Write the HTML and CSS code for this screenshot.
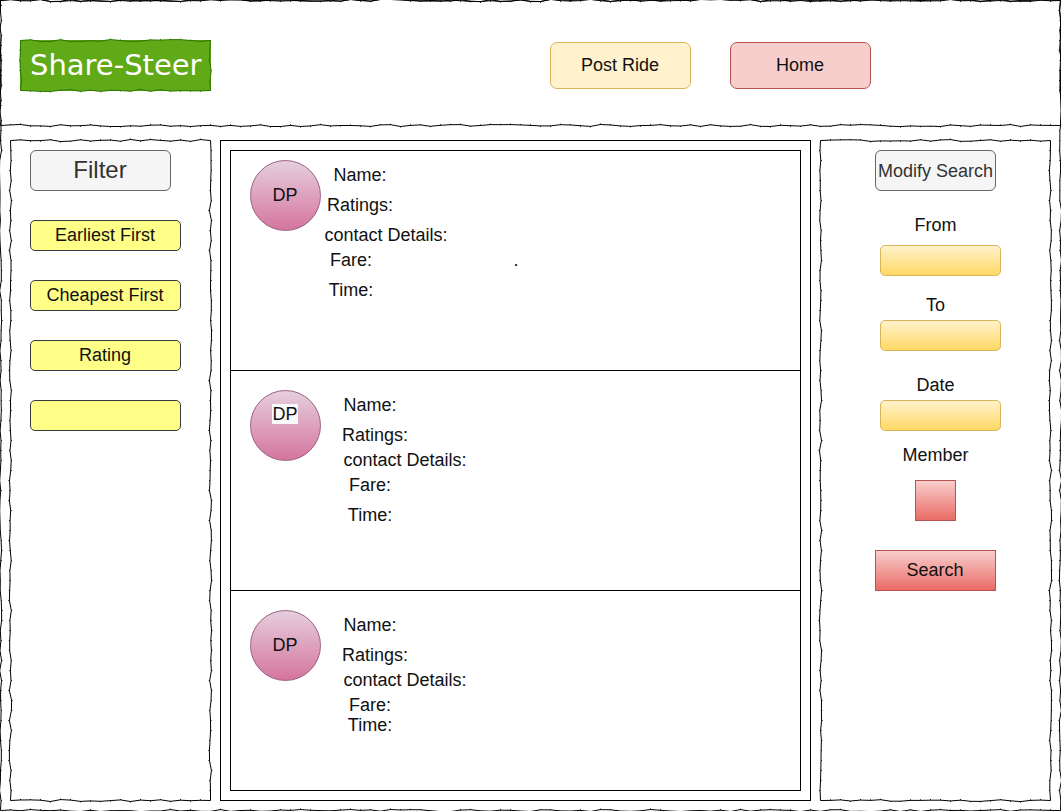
FILE: index.html
```html
<!DOCTYPE html>
<html lang="en">
<head>
<meta charset="utf-8">
<meta name="viewport" content="width=device-width, initial-scale=1">
<title>Share-Steer</title>
<link rel="stylesheet" href="styles.css">
</head>
<body>
<div class="page sketch">
  <header class="header sketch">
    <h1 class="logo sketch">Share-Steer</h1>
    <nav class="nav">
      <button type="button" class="nav-button nav-button-post">Post Ride</button>
      <button type="button" class="nav-button nav-button-home">Home</button>
    </nav>
  </header>

  <div class="columns">
    <aside class="filters sketch">
      <h2 class="panel-title filters-title">Filter</h2>
      <button type="button" class="filter-button">Earliest First</button>
      <button type="button" class="filter-button">Cheapest First</button>
      <button type="button" class="filter-button">Rating</button>
      <button type="button" class="filter-button" aria-label="Filter"></button>
    </aside>

    <main class="results">
      <div class="ride-list">
        <article class="ride">
          <div class="avatar"><span>DP</span></div>
          <div class="details">
            <p class="detail"><span class="label label-l">Name:</span></p>
            <p class="detail"><span class="label label-l">Ratings:</span></p>
            <p class="detail"><span class="label label-xl">contact Details:</span></p>
            <p class="detail detail-close"><span class="label">Fare:</span><span class="value">.</span></p>
            <p class="detail"><span class="label">Time:</span></p>
          </div>
        </article>
        <article class="ride ride-spaced">
          <div class="avatar avatar-top"><span class="avatar-mark">DP</span></div>
          <div class="details">
            <p class="detail"><span class="label">Name:</span></p>
            <p class="detail"><span class="label label-m">Ratings:</span></p>
            <p class="detail detail-close"><span class="label label-xl">contact Details:</span></p>
            <p class="detail detail-close"><span class="label">Fare:</span></p>
            <p class="detail"><span class="label">Time:</span></p>
          </div>
        </article>
        <article class="ride ride-spaced">
          <div class="avatar"><span>DP</span></div>
          <div class="details">
            <p class="detail"><span class="label">Name:</span></p>
            <p class="detail"><span class="label label-m">Ratings:</span></p>
            <p class="detail detail-close"><span class="label label-xl">contact Details:</span></p>
            <p class="detail detail-close"><span class="label">Fare:</span></p>
            <p class="detail detail-flush"><span class="label">Time:</span></p>
          </div>
        </article>
      </div>
    </main>

    <form class="search sketch">
      <h2 class="panel-title search-title">Modify Search</h2>
      <label class="search-label" for="from">From</label>
      <input class="search-input search-input-first" id="from" type="text">
      <label class="search-label" for="to">To</label>
      <input class="search-input" id="to" type="text">
      <label class="search-label" for="date">Date</label>
      <input class="search-input" id="date" type="text">
      <label class="search-label search-label-member" for="member">Member</label>
      <input class="member-input" id="member" type="text">
      <button type="button" class="search-button">Search</button>
    </form>
  </div>
</div>
<script src="sketch.js"></script>
</body>
</html>
```
FILE: styles.css
```css
* {
  box-sizing: border-box;
}

body {
  margin: 0;
  background: #fff;
  color: #111;
  font: 18px/20px "Liberation Sans", Arial, sans-serif;
}

h1, h2, p {
  margin: 0;
  font-size: inherit;
  font-weight: normal;
}

button, input {
  margin: 0;
  padding: 0;
  color: inherit;
  font: inherit;
}

button {
  padding: 0 1px 2px 0;
  cursor: pointer;
}

.sketch {
  position: relative;
}

.sketch-frame {
  position: absolute;
  inset: 0;
  width: 100%;
  height: 100%;
  overflow: visible;
  pointer-events: none;
  fill: none;
  stroke: #000;
  stroke-width: 1px;
}

.page {
  display: flex;
  flex-direction: column;
  min-height: 100vh;
  overflow: hidden;
}

.header {
  display: flex;
  align-items: center;
  justify-content: space-between;
  padding: 40px 190px 35px 20px;
}

.logo {
  padding: 0 9px 0 10px;
  background: #60a917;
  color: #fff;
  font: 29px/51px "DejaVu Sans", Verdana, sans-serif;
}

.logo .sketch-frame {
  stroke: #2d7600;
}

.nav {
  display: flex;
  gap: 39px;
}

.nav-button {
  width: 141px;
  height: 47px;
  border: 1px solid;
  border-radius: 7px;
}

.nav-button-post {
  background: #fff2cc;
  border-color: #d6b656;
}

.nav-button-home {
  background: #f8cecc;
  border-color: #b85450;
}

.columns {
  display: grid;
  flex: 1;
  grid-template-columns: 201px 1fr 231px;
  gap: 9px;
  padding: 14px 10px 10px;
}

.panel-title {
  height: 41px;
  border: 1px solid #666;
  border-radius: 6px;
  background: #f5f5f5;
  color: #333;
  text-align: center;
  white-space: nowrap;
}

.filters {
  display: flex;
  flex-direction: column;
  align-items: flex-start;
  gap: 29px;
  padding: 10px 20px;
}

.filters-title {
  width: 141px;
  padding-right: 1px;
  font-size: 24px;
  line-height: 38px;
}

.filter-button {
  width: 151px;
  height: 31px;
  border: 1px solid #36393d;
  border-radius: 5px;
  background: #ffff88;
}

.results {
  display: flex;
  border: 1px solid #000;
  padding: 9px;
}

.ride-list {
  flex: 1;
  border: 1px solid #000;
}

.ride {
  display: flex;
  min-height: 219px;
  padding: 9px 19px;
}

.ride-spaced {
  gap: 19px;
  min-height: 220px;
  padding: 19px;
  border-top: 1px solid #000;
}

.ride:last-child {
  min-height: 200px;
}

.avatar {
  display: flex;
  flex: none;
  align-items: center;
  justify-content: center;
  width: 71px;
  height: 71px;
  padding: 0 1px 2px 0;
  border: 1px solid #996185;
  border-radius: 50%;
  background: linear-gradient(#e6d0de, #d5739d) border-box;
}

.avatar-top {
  align-items: flex-start;
  padding-top: 13px;
}

.avatar-mark {
  background: #f8f9fa;
}

.details {
  padding-top: 5px;
}

.detail {
  display: flex;
}

.detail + .detail {
  margin-top: 10px;
}

.detail + .detail-close {
  margin-top: 5px;
}

.detail + .detail-flush {
  margin-top: 0;
}

.label {
  width: 60px;
  text-align: center;
  white-space: nowrap;
}

.label-m {
  width: 70px;
}

.label-l {
  width: 78px;
}

.label-xl {
  width: 130px;
}

.value {
  width: 270px;
  text-align: center;
}

.search {
  display: flex;
  flex-direction: column;
  align-items: center;
  padding: 10px 0;
}

.search-title {
  width: 121px;
  margin-bottom: 5px;
  line-height: 41px;
}

.search-label {
  margin-top: 19px;
  margin-bottom: 5px;
}

.search-input {
  width: 121px;
  height: 31px;
  margin-left: 10px;
  margin-bottom: 5px;
  border: 1px solid #d6b656;
  border-radius: 5px;
  background: linear-gradient(#fff2cc, #ffd966);
  text-align: center;
}

.search-input-first {
  margin-top: 5px;
  margin-bottom: 0;
}

.search-label-member {
  margin-top: 9px;
  margin-bottom: 15px;
}

.member-input {
  width: 41px;
  height: 41px;
  border: 1px solid #b85450;
  background: linear-gradient(#f8cecc, #ea6b66);
  text-align: center;
}

.search-button {
  width: 121px;
  height: 41px;
  margin-top: 29px;
  border: 1px solid #b85450;
  background: linear-gradient(#f8cecc, #ea6b66);
}
```
FILE: sketch.js
```js
// Draws a hand-drawn looking outline around every .sketch box.
const SVG_NS = "http://www.w3.org/2000/svg";
const STEP = 10;
const WOBBLE = 2.2;

function randomFrom(seed) {
  let state = seed;
  return () => {
    state = (state * 16807) % 2147483647;
    return state / 2147483647;
  };
}

// Each edge is a chain of short segments, with a small tick where two of them meet.
function outline(width, height, random) {
  const left = 0.5, top = 0.5, right = width - 0.5, bottom = height - 0.5;
  const corners = [[left, top], [right, top], [right, bottom], [left, bottom], [left, top]];
  let path = "M" + left + " " + top;
  for (let i = 0; i < 4; i++) {
    const [x1, y1] = corners[i];
    const [x2, y2] = corners[i + 1];
    const length = Math.hypot(x2 - x1, y2 - y1);
    const dx = (x2 - x1) / length, dy = (y2 - y1) / length;
    const at = (d, shift) => (x1 + dx * d - dy * shift).toFixed(1) + " " + (y1 + dy * d + dx * shift).toFixed(1);
    for (let d = STEP; d < length - 1; d += STEP) {
      const shift = (random() - 0.5) * WOBBLE;
      const tick = shift > 0 ? 0.8 : -0.8;
      path += "L" + at(d, shift) + "L" + at(d, shift + tick) + "L" + at(d, shift);
    }
    path += "L" + x2 + " " + y2;
  }
  return path + "Z";
}

document.querySelectorAll(".sketch").forEach((box, index) => {
  const svg = document.createElementNS(SVG_NS, "svg");
  const path = document.createElementNS(SVG_NS, "path");
  svg.setAttribute("class", "sketch-frame");
  svg.setAttribute("aria-hidden", "true");
  path.setAttribute("stroke-linejoin", "bevel");
  svg.appendChild(path);
  box.appendChild(svg);
  const draw = () => {
    path.setAttribute("d", outline(box.offsetWidth, box.offsetHeight, randomFrom(7919 * (index + 1))));
  };
  draw();
  new ResizeObserver(draw).observe(box);
});
```
